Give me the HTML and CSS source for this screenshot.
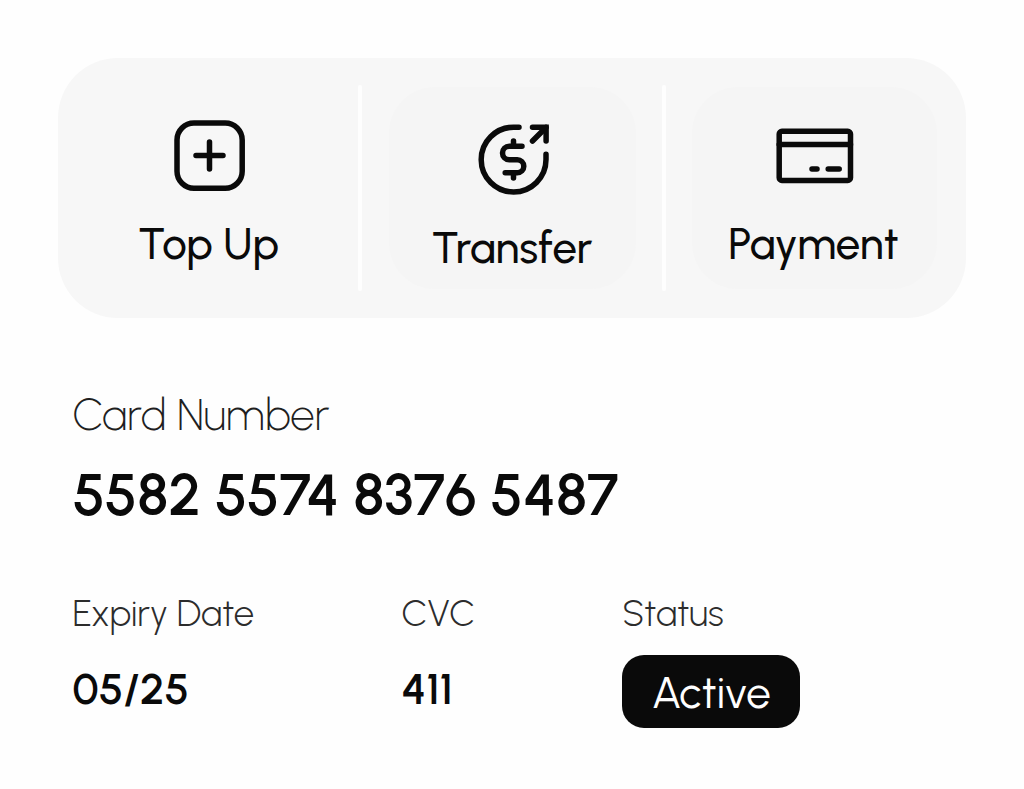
FILE: index.html
```
<!DOCTYPE html>
<html lang="en">
<head>
    <meta charset="UTF-8">
    <meta name="viewport" content="width=device-width, initial-scale=1.0">
    <title>Card Details</title>
    <link rel="stylesheet" href="styles.css">
</head>
<body>
    <div class="actions">
        <div class="action">
            <svg class="icon" viewBox="0 0 85 85">
                <rect x="10" y="10" width="65.2" height="65.2" rx="17"/>
                <path d="M42.5 29v27M29 42.5h27"/>
            </svg>
            <span class="label">Top Up</span>
        </div>
        <div class="divider"></div>
        <div class="action filled lower">
            <svg class="icon" viewBox="0 0 85 85">
                <path d="M48 10.2h-5.5A32.4 32.4 0 1 0 75 42.6V37.3"/>
                <path d="M61.5 24 75 10.5"/>
                <path class="arrow-head" d="M61.5 10.2H75.1V24"/>
                <path d="M42.5 24v5.2M42.5 55.8V61M51 29.2H38.3a6.8 6.8 0 0 0 0 13.6H46.3a6.5 6.5 0 0 1 0 13H34.2"/>
            </svg>
            <span class="label">Transfer</span>
        </div>
        <div class="divider"></div>
        <div class="action filled">
            <svg class="icon" viewBox="0 0 85 85">
                <rect x="7.2" y="18.3" width="71.3" height="49.1" rx="2.7"/>
                <path d="M7.2 31.4h71.3M40 56.1h5M56.2 56.1h11"/>
            </svg>
            <span class="label">Payment</span>
        </div>
    </div>

    <div class="details">
        <div class="title">Card Number</div>
        <div class="number">5582 5574 8376 5487</div>

        <div class="row">
            <div class="field">
                <div class="name">Expiry Date</div>
                <div class="value">05/25</div>
            </div>
            <div class="field">
                <div class="name">CVC</div>
                <div class="value">411</div>
            </div>
            <div class="field">
                <div class="name">Status</div>
                <div class="badge">Active</div>
            </div>
        </div>
    </div>
</body>
</html>
```
FILE: styles.css
```
body {
    margin: 0;
    padding: 58px;
    background-color: #fefefe;
    color: #0a0a0a;
    font-family: 'Urbanist', 'Inter', sans-serif;
    white-space: nowrap;
}

.actions {
    display: flex;
    justify-content: space-between;
    height: 260px;
    padding: 0 29px;
    align-items: center;
    box-sizing: border-box;
    background-color: #f7f7f7;
    border-radius: 60px;
}

.action {
    display: flex;
    flex-direction: column;
    align-items: center;
    width: 245px;
    height: 202px;
    padding: 26px 2px 0 0;
    box-sizing: border-box;
    border-radius: 46px;
}

.action.filled {
    background-color: #f5f5f5;
}

.action.lower {
    width: 247px;
    padding: 30px 0 0;
}

.icon {
    width: 85px;
    height: 85px;
    margin-left: 1px;
    fill: none;
    stroke: #0a0a0a;
    stroke-width: 5.5;
    stroke-linecap: round;
    stroke-linejoin: round;
}

.lower .icon {
    margin-left: 3px;
}

.arrow-head {
    stroke-linejoin: miter;
}

.divider {
    width: 4px;
    height: 206px;
    background-color: #fefefe;
    border-radius: 2px;
}

.label {
    margin-top: 21px;
    font-size: 43.7px;
    font-weight: 500;
    line-height: 50px;
}

.details {
    padding: 72px 0 0 14.6px;
}

.title {
    font-size: 43.6px;
    font-weight: 200;
    line-height: 50px;
    color: #1f1f1f;
}

.number {
    margin-top: 20px;
    font-size: 57.8px;
    font-weight: 600;
    line-height: 70px;
}

.row {
    display: grid;
    grid-template-columns: 329px 220.6px auto;
    margin-top: 63px;
}

.name {
    font-size: 36.4px;
    font-weight: 300;
    line-height: 40px;
    color: #2c2c2c;
}

.value {
    margin-top: 31px;
    font-size: 43.4px;
    font-weight: 600;
    line-height: 50px;
}

.badge {
    width: 178px;
    height: 73px;
    margin-top: 22px;
    background-color: #0a0a0a;
    color: #fefefe;
    font-size: 44px;
    line-height: 76px;
    text-align: center;
    border-radius: 22px;
}
```
